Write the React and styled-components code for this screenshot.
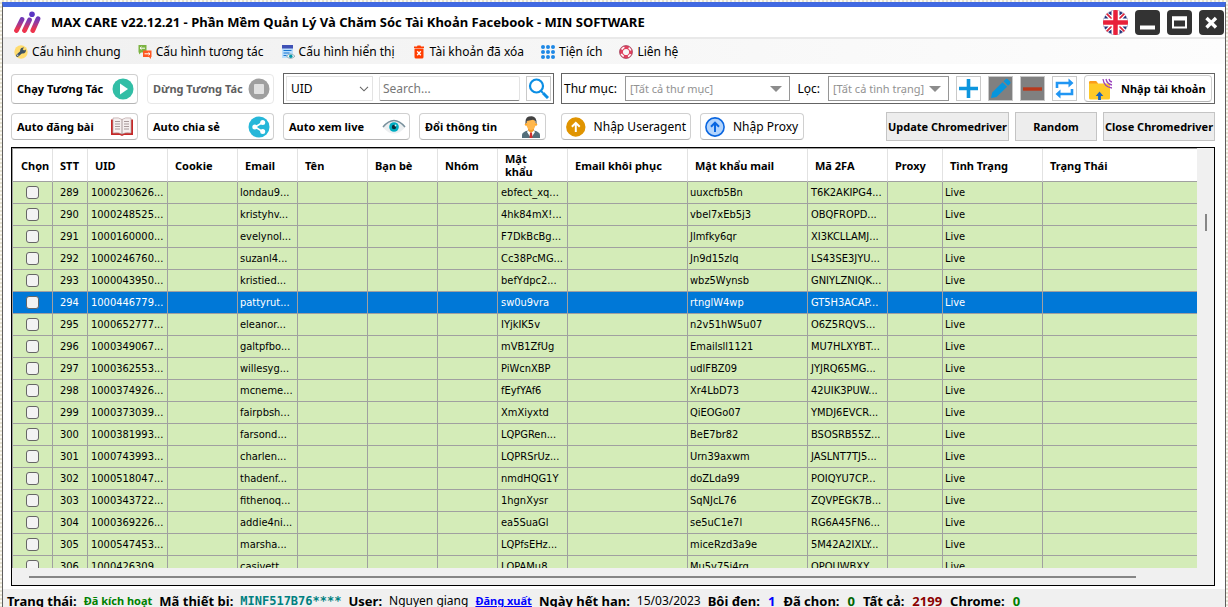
import React from "react";
import styled, { createGlobalStyle, css } from "styled-components";

// Styles

const GlobalStyle = createGlobalStyle`
  *, *::before, *::after {
    box-sizing: border-box;
  }

  body {
    margin: 0;
    color: #000;
    font-family: "Noto Sans", "Open Sans", sans-serif;
    font-size: 12px;
  }

  button, input, select {
    margin: 0;
    color: inherit;
    font: inherit;
  }
`;

const Desktop = styled.div`
  height: 100vh;
  padding: 2px 2px 0;
  overflow: hidden;
  background: repeating-conic-gradient(#e4e0cf 0 25%, #fbfaf4 0 50%) 0 0 / 4px 4px;
`;

const Window = styled.div`
  display: flex;
  flex-direction: column;
  height: 100%;
  border: 1px solid #5f5f5f;
  border-top: 5px solid #4169e1;
  border-bottom: 0;
  background: #fff;
`;

const TitleBar = styled.header`
  display: flex;
  align-items: center;
  height: 30px;
  padding: 0 1px 0 10px;
`;

const Title = styled.h1`
  flex: 1;
  margin: 0 0 0 10px;
  font-size: 13px;
  line-height: 18px;
  white-space: nowrap;
`;

const WindowButtons = styled.div`
  display: flex;
  gap: 7px;
`;

const PlainButton = styled.button`
  display: flex;
  padding: 0;
  border: 0;
  background: none;
`;

const Menu = styled.nav`
  display: flex;
  align-items: center;
  gap: 17px;
  height: 27px;
  padding: 0 11px;
  border-top: 2px solid #e9e9e9;
  background: linear-gradient(90deg, #f0f0f0, #fdfdfd);
`;

const MenuItem = styled.button`
  display: flex;
  align-items: center;
  gap: 4px;
  padding: 0;
  border: 0;
  background: none;
  line-height: 18px;
  white-space: nowrap;
`;

const Toolbar = styled.div`
  display: flex;
  align-items: center;
  gap: ${(p) => p.$gap}px;
  margin: ${(p) => p.$top}px 10px 0 8px;
`;

const ButtonRow = styled.div`
  display: flex;
  align-items: center;
  gap: ${(p) => p.$gap}px;
`;

const Spacer = styled.div`
  flex: 1;
`;

const ActionButton = styled.button`
  display: flex;
  flex: none;
  align-items: center;
  justify-content: space-between;
  width: ${(p) => p.$width || 127}px;
  height: ${(p) => (p.$tall ? 30 : 27)}px;
  padding: 0 3px 0 5px;
  border: 1px solid #d0d0d0;
  border-bottom-color: #b5b5b5;
  border-radius: 4px;
  background: #fff;
  font-size: 11px;
  font-weight: 700;
  white-space: nowrap;

  &:disabled {
    border-color: #e8e8e8;
    color: #606060;
  }
`;

const ImportButton = styled(ActionButton)`
  justify-content: flex-start;
  gap: 8px;
  padding: 0 4px;
  font-size: ${(p) => (p.$bold ? 11 : 12)}px;
  font-weight: ${(p) => (p.$bold ? 700 : 400)};
`;

const FlatButton = styled.button`
  width: ${(p) => p.$width}px;
  height: 29px;
  padding: 0;
  border: 1px solid #c4c4c4;
  background: #ededed;
  font-size: 11px;
  font-weight: 700;
  white-space: nowrap;
`;

const Group = styled.div`
  display: flex;
  flex: ${(p) => (p.$grow ? "1" : "none")};
  align-items: center;
  gap: ${(p) => (p.$grow ? 7 : 6)}px;
  height: 31px;
  padding: 0 2px;
  border: 1px solid #646464;
`;

const Field = styled.label`
  display: flex;
  flex: ${(p) => (p.$grow ? "1" : "none")};
  align-items: center;
  gap: 8px;
  font-size: 12px;
  white-space: nowrap;
`;

const SelectBox = styled.span`
  display: grid;
  flex: ${(p) => (p.$width ? "none" : "1")};
  align-items: center;
  width: ${(p) => (p.$width ? `${p.$width}px` : "auto")};
  height: 25px;

  & > * {
    grid-area: 1 / 1;
  }

  & > svg {
    justify-self: end;
    margin-right: ${(p) => p.$arrow || 8}px;
    pointer-events: none;
  }
`;

const Select = styled.select`
  width: 100%;
  height: 100%;
  padding: 0 4px;
  border: 1px solid #e3e3e3;
  border-radius: 0;
  appearance: none;
  background: #fff;

  &:disabled {
    border-color: #969696;
    color: #929292;
    font-size: 11px;
    opacity: 1;
  }
`;

const SearchInput = styled.input`
  width: 141px;
  height: 25px;
  padding: 0 3px;
  border: 1px solid #e3e3e3;
  border-bottom-color: #868686;
  border-radius: 2px;

  &::placeholder {
    color: #777;
    opacity: 1;
  }
`;

const IconButton = styled.button`
  display: flex;
  flex: none;
  align-items: center;
  justify-content: center;
  width: 25px;
  height: 25px;
  padding: 0;
  border: 1px solid #c9c9c9;
  background: ${(p) => (p.disabled ? "#808080" : "#fff")};
`;

const GridFrame = styled.main`
  display: grid;
  flex: 1;
  grid-template-columns: minmax(0, 1fr) 17px;
  grid-template-rows: minmax(0, 1fr) 17px;
  min-height: 0;
  margin: 6px 10px 3px 8px;
  border: 1px solid #000;
  background: #f0f0f0;
`;

const GridView = styled.div`
  overflow: hidden;
  border-top: 1px solid #a0a0a0;
  border-left: 1px solid #a0a0a0;
  background: #fff;
`;

const VerticalTrack = styled.div`
  display: flex;
  justify-content: center;
  padding-top: 66px;
`;

const HorizontalTrack = styled.div`
  display: flex;
  align-items: center;
  grid-column: 1 / -1;
  padding: 0 78px 0 17px;
`;

const Thumb = styled.div`
  width: ${(p) => (p.$vertical ? "2px" : "100%")};
  height: ${(p) => (p.$vertical ? "17px" : "2px")};
  background: #868686;
`;

const Table = styled.table`
  width: 100%;
  border-collapse: separate;
  border-spacing: 0;
  table-layout: fixed;
`;

const HeadCell = styled.th`
  height: 33px;
  padding: 0 12px 0 7px;
  border-right: 1px solid #e2e2e2;
  border-bottom: 1px solid #a0a0a0;
  background: #fff;
  font-size: 11px;
  line-height: 13px;
  text-align: left;

  &:first-child {
    padding: 0 0 0 8px;
  }

  &:last-child {
    border-right: 0;
  }
`;

const Cell = styled.td`
  height: 22px;
  padding: 0 0 0 ${(p) => p.$pad || 3}px;
  border-right: 1px solid #a0a0a0;
  border-bottom: 1px solid #a0a0a0;
  font-family: "DejaVu Sans Condensed", "Noto Sans", sans-serif;
  font-size: 11px;
  line-height: 14px;
  white-space: nowrap;

  &:last-child {
    border-right: 0;
  }
`;

const Row = styled.tr`
  background: #d4ecb8;

  ${(p) =>
    p.$selected &&
    css`
      background: #0078d7;
      color: #fff;
    `}
`;

const Check = styled.input`
  display: block;
  width: 13px;
  height: 13px;
  border: 1px solid #666;
  border-radius: 3px;
  appearance: none;
  background: #f3f3f3;

  &:checked {
    background: #0078d7;
  }
`;

const StatusBar = styled.footer`
  display: flex;
  gap: 7px;
  height: 18px;
  padding-left: 4px;
  background: #f0f0f0;
  line-height: 24px;
  white-space: nowrap;
`;

const Label = styled.span`
  font-size: 13px;
  font-weight: 700;
`;

const Value = styled.span`
  font-size: 12px;
`;

const Count = styled(Label)`
  padding: 0 1px;
  color: ${(p) => p.$color};
`;

const Active = styled.span`
  color: #008000;
  font-size: 11px;
  font-weight: 700;
`;

const DeviceCode = styled.span`
  color: #008080;
  font-family: "DejaVu Sans Mono", monospace;
  font-size: 12px;
  font-weight: 700;
`;

const StatusLink = styled.a`
  color: #00f;
  font-size: 11px;
  font-weight: 700;
`;

// Icons

const Logo = () => (
  <svg width="28" height="24" viewBox="0 0 28 24" fill="none" strokeLinecap="round">
    <defs>
      <linearGradient id="logo" gradientUnits="userSpaceOnUse" x1="0" y1="3" x2="0" y2="23">
        <stop offset="0" stopColor="#4b35c9" />
        <stop offset="0.45" stopColor="#8d3aa6" />
        <stop offset="0.8" stopColor="#e8354f" />
        <stop offset="1" stopColor="#f0324a" />
      </linearGradient>
    </defs>
    <path d="M3.500 20.500 9 9.500M11.500 20.500 16.500 10M19.800 20.500 25 8.800" stroke="url(#logo)" strokeWidth="4.800" />
    <circle cx="19" cy="4.300" r="2.800" fill="#5a35c4" />
  </svg>
);

const Flag = () => (
  <svg width="25" height="25" viewBox="0 0 50 50">
    <clipPath id="flag">
      <circle cx="25" cy="25" r="25" />
    </clipPath>
    <g clipPath="url(#flag)">
      <path fill="#25337a" d="M0 0h50v50H0z" />
      <path stroke="#fff" strokeWidth="8" d="M0 0 50 50M50 0 0 50M12 0l26 50M38 0 12 50M0 12l50 26M50 12 0 38" />
      <path stroke="#e0243c" strokeWidth="3.500" d="M0 0 50 50M50 0 0 50" />
      <path stroke="#fff" strokeWidth="15" d="M25 0v50M0 25h50" />
      <path stroke="#e8203a" strokeWidth="9" d="M25 0v50M0 25h50" />
      <path fill="#25337a" d="M10 6 17 2v9ZM40 6 33 2v9ZM10 44l7 4v-9ZM40 44l-7 4v-9ZM5 11 2 17h9ZM45 11l3 6h-9ZM5 39l-3-6h9ZM45 39l3-6h-9Z" />
    </g>
  </svg>
);

const WindowIcon = ({ children }) => (
  <svg width="25" height="25" viewBox="0 0 25 25" fill="none" stroke="#fff">
    <rect width="25" height="25" rx="4" fill="#333" stroke="none" />
    {children}
  </svg>
);

const Wrench = () => (
  <svg width="14" height="14" viewBox="0 0 14 14">
    <circle cx="7" cy="7" r="6.700" fill="#ffdc6e" />
    <path d="M3.500 10.500 8.500 6" stroke="#3d5263" strokeWidth="2.800" strokeLinecap="round" />
    <path d="M10.200 2.600 8.600 4.300l1 1.400 2.200-1.200c.6 2.300-.8 4-3 4C6.700 8.300 5.600 6.600 6.300 4.700c.6-1.600 2-2.600 3.900-2.100Z" fill="#3d5263" />
    <circle cx="3.700" cy="10.300" r=".8" fill="#c9d3da" />
  </svg>
);

const Chat = () => (
  <svg width="14" height="14" viewBox="0 0 14 14">
    <path d="M.5 0h8v7.500H3L1 9.500V7.500H.5Z" fill="#7cb342" />
    <path d="M5 5.500h8.500v6.500H13v2l-2-2H5Z" fill="#ff5722" />
    <path d="M2 3.200h5M3.500 1.800 2 3.200l1.500 1.400M6.500 8.800H12M10.500 7.400 12 8.800l-1.500 1.400" fill="none" stroke="#fff" />
  </svg>
);

const DisplayIcon = () => (
  <svg width="14" height="14" viewBox="0 0 14 14">
    <path d="M1 0h11v13H1z" fill="#bbdefb" />
    <path d="M1 0h11v3.500H1z" fill="#3f51b5" />
    <path d="M2.500 5.500h8M2.500 8h6M2.500 10.500h3" stroke="#1976d2" strokeWidth="1.200" />
    <path d="M5.500 11.200q4-4.400 8.500 0-4.500 4.400-8.500 0Z" fill="#eef6f8" stroke="#78909c" strokeWidth=".7" />
    <circle cx="9.800" cy="11.200" r="1.700" fill="#0097a7" />
  </svg>
);

const Trash = () => (
  <svg width="14" height="14" viewBox="0 0 14 14">
    <path d="M2 1.500h3L5.500.5h3l.5 1h3V3H2ZM2.500 3.500h9V12q0 1.500-1.500 1.500H4Q2.500 13.500 2.500 12Z" fill="#ff3d00" />
    <path d="m5.200 6.200 3.600 4M8.800 6.200l-3.600 4" stroke="#fff" strokeWidth="1.300" />
  </svg>
);

const Dots = () => (
  <svg width="14" height="14" viewBox="0 0 14 14" fill="#1e88e5">
    {[2, 7, 12].map((y) => [2, 7, 12].map((x) => <circle key={`${x}-${y}`} cx={x} cy={y} r="2" />))}
  </svg>
);

const Lifebuoy = () => (
  <svg width="14" height="14" viewBox="0 0 14 14" fill="none">
    <circle cx="7" cy="7" r="4.800" stroke="#e0405e" strokeWidth="3.400" />
    <circle cx="7" cy="7" r="5" stroke="#fff" strokeWidth="1.600" strokeDasharray="3.400 4.450" strokeDashoffset="-2.200" />
    <circle cx="7" cy="7" r="6.500" stroke="#8c2c4a" strokeWidth=".6" />
  </svg>
);

const Play = () => (
  <svg width="22" height="22" viewBox="0 0 22 22">
    <circle cx="11" cy="11" r="10.500" fill="#32bea6" />
    <path d="m8 5.500 8 5.500-8 5.500Z" fill="#fff" />
  </svg>
);

const Stop = () => (
  <svg width="22" height="22" viewBox="0 0 22 22">
    <circle cx="11" cy="11" r="10.500" fill="#9f9f9f" />
    <rect x="6" y="6" width="10" height="10" rx="1" fill="#e0e0e0" />
  </svg>
);

const Book = () => (
  <svg width="24" height="20" viewBox="0 0 24 20">
    <path d="M1 2.500h22V18H14l-2 1-2-1H1Z" fill="#c62828" />
    <path d="M3 1q6-1 9 1.500Q15 0 21 1v15q-6-.8-9 1-3-1.800-9-1Z" fill="#f5efef" stroke="#b7a4a4" strokeWidth=".7" />
    <path d="M5 4.500h5M5 7h5M5 9.500h5M5 12h5M14 4.500h5M14 7h5M14 9.500h5M14 12h5M12 2.500V17" stroke="#a89a9b" />
  </svg>
);

const Share = () => (
  <svg width="22" height="22" viewBox="0 0 22 22">
    <circle cx="11" cy="11" r="10.500" fill="#26b7d9" />
    <path d="M14.500 6.500 7 11l7.500 4.500" fill="none" stroke="#fff" strokeWidth="1.600" />
    <g fill="#fff">
      <circle cx="14.700" cy="6.500" r="2.500" />
      <circle cx="6.800" cy="11" r="2.500" />
      <circle cx="14.700" cy="15.500" r="2.500" />
    </g>
  </svg>
);

const Eye = () => (
  <svg width="24" height="16" viewBox="0 0 24 16">
    <path d="M1 8.500Q12-5 23 8.500 12 21 1 8.500Z" fill="#eceff1" />
    <path d="M1 8Q12-5 23 8" fill="none" stroke="#78909c" strokeWidth="1.500" />
    <circle cx="12" cy="8" r="4.800" fill="#00acc1" />
    <circle cx="12" cy="8" r="2.200" fill="#0b2b38" />
    <circle cx="13.500" cy="6.500" r=".9" fill="#e0f7fa" />
  </svg>
);

const Person = () => (
  <svg width="22" height="22" viewBox="-2 0 22 22">
    <path d="M0 22v-3q0-3 6-4.500h6q6 1.500 6 4.500v3Z" fill="#546e7a" />
    <path d="M6 12h6v3l-3 3-3-3Z" fill="#f29b2e" />
    <path d="m6 14.500 3 2.500 3-2.500 1 1.500-4 6-4-6Z" fill="#fff" />
    <path d="m8 17 1-.7 1 .7.500 5h-3Z" fill="#d32f2f" />
    <ellipse cx="9" cy="8" rx="4.700" ry="6" fill="#ffb74d" />
    <circle cx="4" cy="8.500" r="1.200" fill="#ffa726" />
    <circle cx="14" cy="8.500" r="1.200" fill="#ffa726" />
    <path d="M3.500 8V5.500Q3.500 0 10 .3 15 .7 14.500 8l-1-1.500V5L11 3.800 4.800 5v1.500Z" fill="#424242" />
  </svg>
);

const UpArrow = ({ fill, stroke, ring }) => (
  <svg width="20" height="20" viewBox="0 0 20 20" fill="none">
    <circle cx="10" cy="10" r="9.100" fill={fill} stroke={ring} strokeWidth="1.600" />
    <path d="M10 15V6M6 9.700l4-4 4 4" stroke={stroke} strokeWidth="2" />
  </svg>
);

const Magnifier = () => (
  <svg width="21" height="21" viewBox="0 0 21 21" fill="none" stroke="#0b8ee4">
    <circle cx="8.500" cy="8" r="6.500" strokeWidth="2.200" />
    <path d="m13 13 2 2" strokeWidth="2" />
    <path d="m15 15 5 5" strokeWidth="3" />
  </svg>
);

const Plus = () => (
  <svg width="21" height="21" viewBox="0 0 21 21">
    <path d="M10.500 1v19M1 10.500h19" stroke="#0d96de" strokeWidth="3.600" />
  </svg>
);

const Pencil = () => (
  <svg width="21" height="21" viewBox="0 0 21 21" fill="#0795dc">
    <path d="m1 20 1.200-5.500L12.500 4.200l4.600 4.600L6.500 19ZM13.500 3.200l1.800-1.800q1.400-1.200 2.800 0l1.800 1.800q1.200 1.400 0 2.800L18.100 7.800Z" />
  </svg>
);

const Minus = () => (
  <svg width="21" height="21" viewBox="0 0 21 21">
    <path d="M1 11h19" stroke="#b8391c" strokeWidth="3.400" />
  </svg>
);

const Refresh = () => (
  <svg width="21" height="21" viewBox="0 0 21 21" fill="none" stroke="#2196f3" strokeWidth="2.600">
    <path d="M3 10V5h13M18 11v5H5" />
    <path d="m14.500.5 5 4.500-5 4.500ZM6.500 11.500l-5 4.500 5 4.500Z" fill="#2196f3" stroke="none" />
  </svg>
);

const Folder = () => (
  <svg width="24" height="22" viewBox="0 0 24 22">
    <path d="M0 4.500Q0 3 1.500 3H7l2 2.500h10q2 0 2 2V20q0 1.500-1.500 1.500h-18Q0 21.500 0 20Z" fill="#ffca28" />
    <path d="M0 4.500Q0 3 1.500 3H7l2 2.500H0Z" fill="#fb9c1c" />
    <path d="M10.500 13.500 14.300 18h-2.400v4H9.100v-4H6.700Z" fill="#1a63bd" />
    <g fill="none" stroke="#9b44bd" strokeWidth="1.300">
      <path d="M14 1q1 8 9 9M17 1q1 5 6 6M20 1q.5 2.500 3 3" />
    </g>
  </svg>
);

const Triangle = () => (
  <svg width="12" height="6" viewBox="0 0 12 6">
    <path d="M0 0h12L6 6Z" fill="#8c8c8c" />
  </svg>
);

const Chevron = () => (
  <svg width="10" height="6" viewBox="0 0 10 6">
    <path d="m1 .8 4 4 4-4" fill="none" stroke="#666" strokeWidth="1.100" />
  </svg>
);

// Data

const menuItems = [
  ["Cấu hình chung", Wrench],
  ["Cấu hình tương tác", Chat],
  ["Cấu hình hiển thị", DisplayIcon],
  ["Tài khoản đã xóa", Trash],
  ["Tiện ích", Dots],
  ["Liên hệ", Lifebuoy],
];

const columns = [
  ["Chọn", 40],
  ["STT", 35],
  ["UID", 80],
  ["Cookie", 70],
  ["Email", 60],
  ["Tên", 70],
  ["Bạn bè", 70],
  ["Nhóm", 60],
  ["Mật khẩu", 70],
  ["Email khôi phục", 120],
  ["Mật khẩu mail", 120],
  ["Mã 2FA", 80],
  ["Proxy", 55],
  ["Tình Trạng", 100],
  ["Trạng Thái"],
];

const accounts = [
  [289, "1000230626...", "londau9...", "ebfect_xq...", "uuxcfb5Bn", "T6K2AKIPG4..."],
  [290, "1000248525...", "kristyhv...", "4hk84mX!...", "vbel7xEb5j3", "OBQFROPD..."],
  [291, "1000160000...", "evelynol...", "F7DkBcBg...", "Jlmfky6qr", "XI3KCLLAMJ..."],
  [292, "1000246760...", "suzanl4...", "Cc38PcMG...", "Jn9d15zlq", "LS43SE3JYU..."],
  [293, "1000043950...", "kristied...", "befYdpc2...", "wbz5Wynsb", "GNIYLZNIQK..."],
  [294, "1000446779...", "pattyrut...", "sw0u9vra", "rtnglW4wp", "GT5H3ACAP..."],
  [295, "1000652777...", "eleanor...", "IYjkIK5v", "n2v51hW5u07", "O6Z5RQVS..."],
  [296, "1000349067...", "galtpfbo...", "mVB1ZfUg", "Emailsll1121", "MU7HLXYBT..."],
  [297, "1000362553...", "willesyg...", "PiWcnXBP", "udlFBZ09", "JYJRQ65MG..."],
  [298, "1000374926...", "mcneme...", "fEyfYAf6", "Xr4LbD73", "42UIK3PUW..."],
  [299, "1000373039...", "fairpbsh...", "XmXiyxtd", "QiEOGo07", "YMDJ6EVCR..."],
  [300, "1000381993...", "farsond...", "LQPGRen...", "BeE7br82", "BSOSRB55Z..."],
  [301, "1000743993...", "charlen...", "LQPRSrUz...", "Urn39axwm", "JASLNT7TJ5..."],
  [302, "1000518047...", "thadenf...", "nmdHQG1Y", "doZLda99", "POIQYU7CP..."],
  [303, "1000343722...", "fithenoq...", "1hgnXysr", "SqNJcL76", "ZQVPEGK7B..."],
  [304, "1000369226...", "addie4ni...", "ea5SuaGl", "se5uC1e7l", "RG6A45FN6..."],
  [305, "1000547453...", "marsha...", "LQPfsEHz...", "miceRzd3a9e", "5M42A2IXLY..."],
  [306, "1000426309...", "casivett...", "LQPAMu8...", "Mu5v75j4rg", "QPQUWBXY..."],
];

const selectedAccount = 294;

function AccountTable() {
  return (
    <Table>
      <colgroup>
        {columns.map(([name, width]) => (
          <col key={name} width={width} />
        ))}
      </colgroup>
      <thead>
        <tr>
          {columns.map(([name]) => (
            <HeadCell key={name} scope="col">{name}</HeadCell>
          ))}
        </tr>
      </thead>
      <tbody>
        {accounts.map(([stt, uid, email, password, mailPassword, code]) => (
          <Row key={stt} $selected={stt === selectedAccount}>
            <Cell $pad={13}>
              <Check type="checkbox" aria-label={`Chọn ${stt}`} />
            </Cell>
            <Cell $pad={7}>{stt}</Cell>
            <Cell>{uid}</Cell>
            <Cell />
            <Cell $pad={2}>{email}</Cell>
            <Cell />
            <Cell />
            <Cell />
            <Cell>{password}</Cell>
            <Cell />
            <Cell $pad={2}>{mailPassword}</Cell>
            <Cell>{code}</Cell>
            <Cell />
            <Cell $pad={2}>Live</Cell>
            <Cell />
          </Row>
        ))}
      </tbody>
    </Table>
  );
}

export default function App() {
  return (
    <Desktop>
      <GlobalStyle />
      <Window>
        <TitleBar>
          <Logo />
          <Title>MAX CARE v22.12.21 - Phần Mềm Quản Lý Và Chăm Sóc Tài Khoản Facebook - MIN SOFTWARE</Title>
          <WindowButtons>
            <PlainButton aria-label="English"><Flag /></PlainButton>
            <PlainButton aria-label="Minimize">
              <WindowIcon><path d="M5 17.500h15" strokeWidth="4" /></WindowIcon>
            </PlainButton>
            <PlainButton aria-label="Maximize">
              <WindowIcon>
                <path d="M6 7.500h13v10H6z" strokeWidth="2" />
                <path d="M5 8.500h15" strokeWidth="4" />
              </WindowIcon>
            </PlainButton>
            <PlainButton aria-label="Close">
              <WindowIcon><path d="m7.500 8 9.500 9.500M17 8l-9.500 9.500" strokeWidth="3.400" /></WindowIcon>
            </PlainButton>
          </WindowButtons>
        </TitleBar>

        <Menu>
          {menuItems.map(([name, Icon]) => (
            <MenuItem key={name}>
              <Icon />
              {name}
            </MenuItem>
          ))}
        </Menu>

        <Toolbar $top={9} $gap={7}>
          <ButtonRow $gap={9}>
            <ActionButton $tall>Chạy Tương Tác<Play /></ActionButton>
            <ActionButton $tall disabled>Dừng Tương Tác<Stop /></ActionButton>
            <Group>
              <SelectBox $width={87} $arrow={4}>
                <Select aria-label="UID">
                  <option>UID</option>
                </Select>
                <Chevron />
              </SelectBox>
              <SearchInput type="text" placeholder="Search..." aria-label="Search" />
              <IconButton aria-label="Search"><Magnifier /></IconButton>
            </Group>
          </ButtonRow>
          <Group $grow>
            <Field $grow>
              Thư mục:
              <SelectBox>
                <Select disabled>
                  <option>[Tất cả thư mục]</option>
                </Select>
                <Triangle />
              </SelectBox>
            </Field>
            <Field>
              Lọc:
              <SelectBox $width={121}>
                <Select disabled>
                  <option>[Tất cả tình trạng]</option>
                </Select>
                <Triangle />
              </SelectBox>
            </Field>
            <IconButton aria-label="Thêm"><Plus /></IconButton>
            <IconButton aria-label="Sửa" disabled><Pencil /></IconButton>
            <IconButton aria-label="Xóa" disabled><Minus /></IconButton>
            <IconButton aria-label="Tải lại"><Refresh /></IconButton>
            <ImportButton $bold $width={128}><Folder />Nhập tài khoản</ImportButton>
          </Group>
        </Toolbar>

        <Toolbar $top={8} $gap={15}>
          <ButtonRow $gap={9}>
            <ActionButton>Auto đăng bài<Book /></ActionButton>
            <ActionButton>Auto chia sẻ<Share /></ActionButton>
            <ActionButton>Auto xem live<Eye /></ActionButton>
            <ActionButton>Đổi thông tin<Person /></ActionButton>
          </ButtonRow>
          <ButtonRow $gap={9}>
            <ImportButton $width={130}>
              <UpArrow fill="#e09400" ring="#e09400" stroke="#fff" />
              Nhập Useragent
            </ImportButton>
            <ImportButton $width={104}>
              <UpArrow fill="#b3d4fc" ring="#0a66e0" stroke="#0a66e0" />
              Nhập Proxy
            </ImportButton>
          </ButtonRow>
          <Spacer />
          <ButtonRow $gap={6}>
            <FlatButton $width={123}>Update Chromedriver</FlatButton>
            <FlatButton $width={82}>Random</FlatButton>
            <FlatButton $width={112}>Close Chromedriver</FlatButton>
          </ButtonRow>
        </Toolbar>

        <GridFrame>
          <GridView>
            <AccountTable />
          </GridView>
          <VerticalTrack>
            <Thumb $vertical />
          </VerticalTrack>
          <HorizontalTrack>
            <Thumb />
          </HorizontalTrack>
        </GridFrame>

        <StatusBar>
          <Label>Trạng thái:</Label>
          <Active>Đã kích hoạt</Active>
          <Label>Mã thiết bị:</Label>
          <DeviceCode>MINF517B76****</DeviceCode>
          <Label>User:</Label>
          <Value>Nguyen giang</Value>
          <StatusLink href="#logout">Đăng xuất</StatusLink>
          <Label>Ngày hết hạn:</Label>
          <Value>15/03/2023</Value>
          <Label>Bôi đen:</Label>
          <Count $color="#0000ff">1</Count>
          <Label>Đã chọn:</Label>
          <Count $color="#006400">0</Count>
          <Label>Tất cả:</Label>
          <Count $color="#8b0000">2199</Count>
          <Label>Chrome:</Label>
          <Count $color="#008000">0</Count>
        </StatusBar>
      </Window>
    </Desktop>
  );
}
